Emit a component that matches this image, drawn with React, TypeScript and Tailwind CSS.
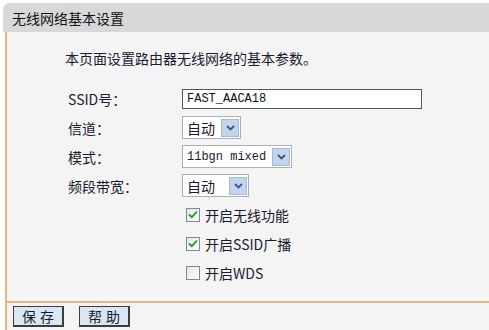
import React from "react";

const cjk = { fontFamily: '"Noto Sans CJK SC", "Noto Sans", sans-serif' };
const mono = { fontFamily: '"Liberation Mono", "Noto Sans CJK SC", monospace' };

const Arrow = () => (
  <div className="w-[18px] h-[18px] bg-[#c4d4ec] border border-[#a7b9d6] flex items-center justify-center">
    <svg width="9" height="6" viewBox="0 0 9 6">
      <path d="M1 1 L4.5 4.5 L8 1" fill="none" stroke="#3f5680" strokeWidth="1.8" />
    </svg>
  </div>
);

const Select = ({ text, width, isMono }: { text: string; width: string; isMono?: boolean }) => (
  <div className={`h-[23px] ${width} bg-white border border-[#a9b0b8] flex items-center justify-between pl-[4px] pr-[1px]`}>
    <span className="text-[14px] leading-none text-[#1a1a2e]" style={isMono ? { ...mono, fontSize: 12 } : cjk}>
      {text}
    </span>
    <Arrow />
  </div>
);

const Check = ({ checked, label }: { checked: boolean; label: string }) => (
  <div className="flex items-center gap-[5px] ml-[4px]">
    <div className="w-[14px] h-[14px] border border-[#7b8a99] bg-gradient-to-br from-[#e6e6e6] to-white flex items-center justify-center">
      {checked && (
        <svg width="10" height="9" viewBox="0 0 10 9">
          <path d="M1 4.5 L3.8 7.2 L9 1.5" fill="none" stroke="#1f9a2a" strokeWidth="1.8" />
        </svg>
      )}
    </div>
    <span className="text-[14px] leading-none text-[#1a1a2e]" style={cjk}>{label}</span>
  </div>
);

const Row = ({ label, children }: { label?: string; children: React.ReactNode }) => (
  <div className="h-[29px] flex items-center">
    <div className="w-[175px] pl-[61px] text-[14px] leading-none text-[#1a1a2e]" style={cjk}>{label}</div>
    {children}
  </div>
);

const Btn = ({ text }: { text: string }) => (
  <button
    className="h-[21px] w-[51px] bg-[#dbe6f5] border border-[#3c3c3c] border-r-2 border-b-2 text-[14px] leading-none text-[#1a1a2e] tracking-[4px] pl-[4px]"
    style={cjk}
  >
    {text}
  </button>
);

export default function App() {
  return (
    <div className="w-[489px] h-[330px] bg-white overflow-hidden pt-[3px]" style={cjk}>
      <div className="ml-[3px] h-[29px] bg-[#d8d8d8] rounded-tl-[7px] flex items-center pl-[9px]">
        <span className="text-[14px] leading-none text-[#111]">无线网络基本设置</span>
      </div>
      <div className="ml-[5px] border-l-2 border-[#e7b680] bg-[#f4f4f4] h-[298px] flex flex-col">
        <div className="h-[271px] pt-[17px] border-b-2 border-[#e7b680]">
          <div className="pl-[58px] text-[14px] leading-[18px] text-[#1a1a33]">本页面设置路由器无线网络的基本参数。</div>
          <div className="mt-[17px] flex flex-col">
            <Row label="SSID号：">
              <div className="w-[240px] h-[20px] bg-white border border-[#505a5a] flex items-center pl-[4px]">
                <span className="text-[12px] leading-none text-[#111]" style={mono}>FAST_AACA18</span>
              </div>
            </Row>
            <Row label="信道：">
              <Select text="自动" width="w-[59px]" />
            </Row>
            <Row label="模式：">
              <Select text="11bgn mixed" width="w-[110px]" isMono />
            </Row>
            <Row label="频段带宽：">
              <Select text="自动" width="w-[67px]" />
            </Row>
            <Row>
              <Check checked label="开启无线功能" />
            </Row>
            <Row>
              <Check checked label="开启SSID广播" />
            </Row>
            <Row>
              <Check checked={false} label="开启WDS" />
            </Row>
          </div>
        </div>
        <div className="flex items-center gap-[15px] pl-[6px] pt-[2px] h-[25px]">
          <Btn text="保存" />
          <Btn text="帮助" />
        </div>
      </div>
    </div>
  );
}
